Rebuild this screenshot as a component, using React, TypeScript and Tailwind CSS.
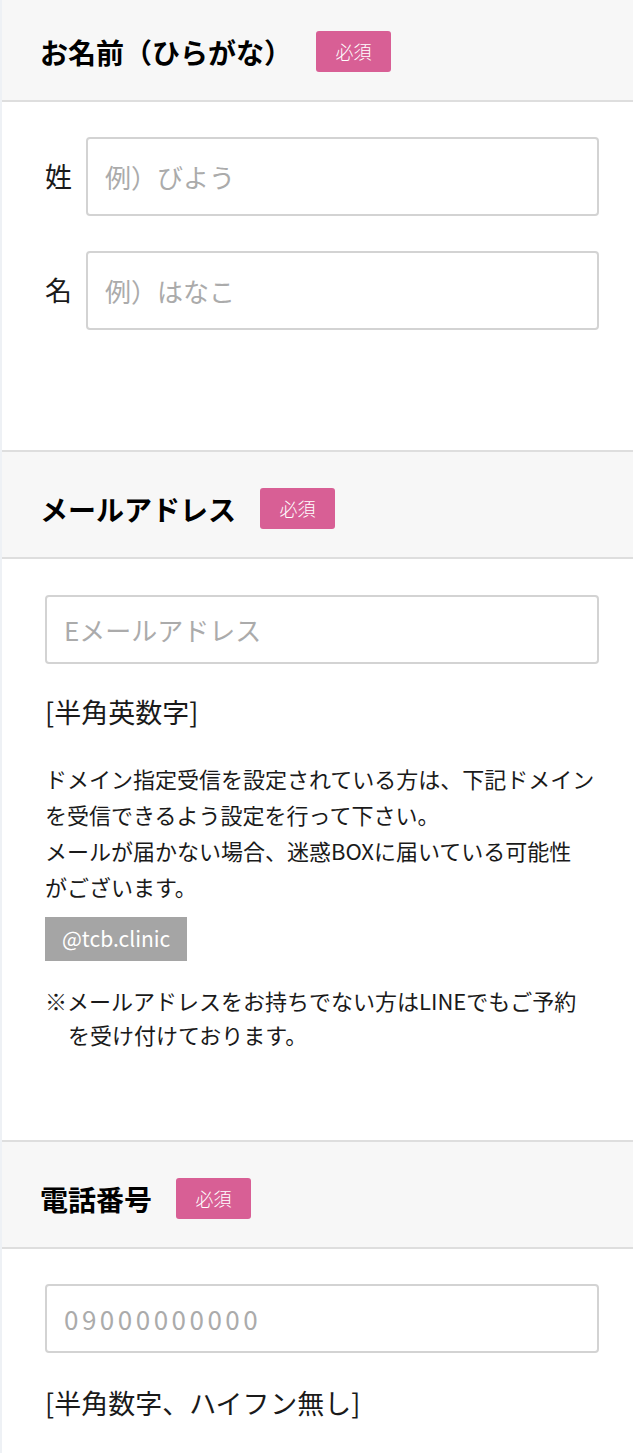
import React from "react";

const font = { fontFamily: '"Noto Sans CJK JP", "Noto Sans", sans-serif' };

function Badge() {
  return (
    <span className="inline-flex h-[41px] w-[75px] items-center justify-center rounded-[3px] bg-[#d85f95] text-[18px] font-light text-white">
      必須
    </span>
  );
}

function Header({ title, top }: { title: string; top: string }) {
  return (
    <div className={`flex items-center gap-6 border-b-2 border-[#dedede] bg-[#f7f7f7] pl-[38px] pb-[28px] ${top}`}>
      <h2 className="text-[28px] font-bold leading-none text-black">{title}</h2>
      <Badge />
    </div>
  );
}

function Input({ placeholder, h, extra = "" }: { placeholder: string; h: string; extra?: string }) {
  return (
    <input
      placeholder={placeholder}
      className={`w-full ${h} rounded-[4px] border-2 border-[#d3d3d3] bg-white px-[17px] text-[26px] text-black outline-none placeholder:text-[#ababab] ${extra}`}
      style={font}
    />
  );
}

export default function App() {
  return (
    <div className="min-h-[1453px] overflow-hidden border-l-2 border-[#eef1f5] bg-white text-[#1a1a1a]" style={font}>
      <Header title="お名前（ひらがな）" top="pt-[31px]" />
      <div className="flex flex-col gap-[35px] border-b-2 border-[#dedede] pt-[35px] pb-[120px] pl-[43px] pr-[34px]">
        <div className="flex items-center gap-[14px]">
          <span className="w-[28px] text-[27px]">姓</span>
          <Input placeholder="例）びよう" h="h-[79px]" />
        </div>
        <div className="flex items-center gap-[14px]">
          <span className="w-[28px] text-[27px]">名</span>
          <Input placeholder="例）はなこ" h="h-[79px]" />
        </div>
      </div>

      <Header title="メールアドレス" top="pt-[36px]" />
      <div className="border-b-2 border-[#dedede] pt-[36px] pb-[89px] pl-[43px] pr-[34px]">
        <Input placeholder="Eメールアドレス" h="h-[69px]" />
        <p className="mt-[34px] text-[27px] leading-none">[半角英数字]</p>
        <p className="mt-[35px] whitespace-nowrap text-[22px] leading-[36px]">
          ドメイン指定受信を設定されている方は、下記ドメイン
          <br />
          を受信できるよう設定を行って下さい。
          <br />
          メールが届かない場合、迷惑BOXに届いている可能性
          <br />
          がございます。
        </p>
        <div className="mt-[13px] inline-flex h-[44px] items-center bg-[#a5a5a5] px-[17px] text-[21px] text-white">
          @tcb.clinic
        </div>
        <p className="mt-[22px] whitespace-nowrap pl-[23px] -indent-[23px] text-[22px] leading-[34px]">
          ※メールアドレスをお持ちでない方はLINEでもご予約
          <br />
          を受け付けております。
        </p>
      </div>

      <Header title="電話番号" top="pt-[36px]" />
      <div className="pt-[35px] pb-[40px] pl-[43px] pr-[34px]">
        <Input placeholder="09000000000" h="h-[69px]" extra="tracking-[3.5px]" />
        <p className="mt-[36px] text-[27px] leading-none">[半角数字、ハイフン無し]</p>
      </div>
    </div>
  );
}
